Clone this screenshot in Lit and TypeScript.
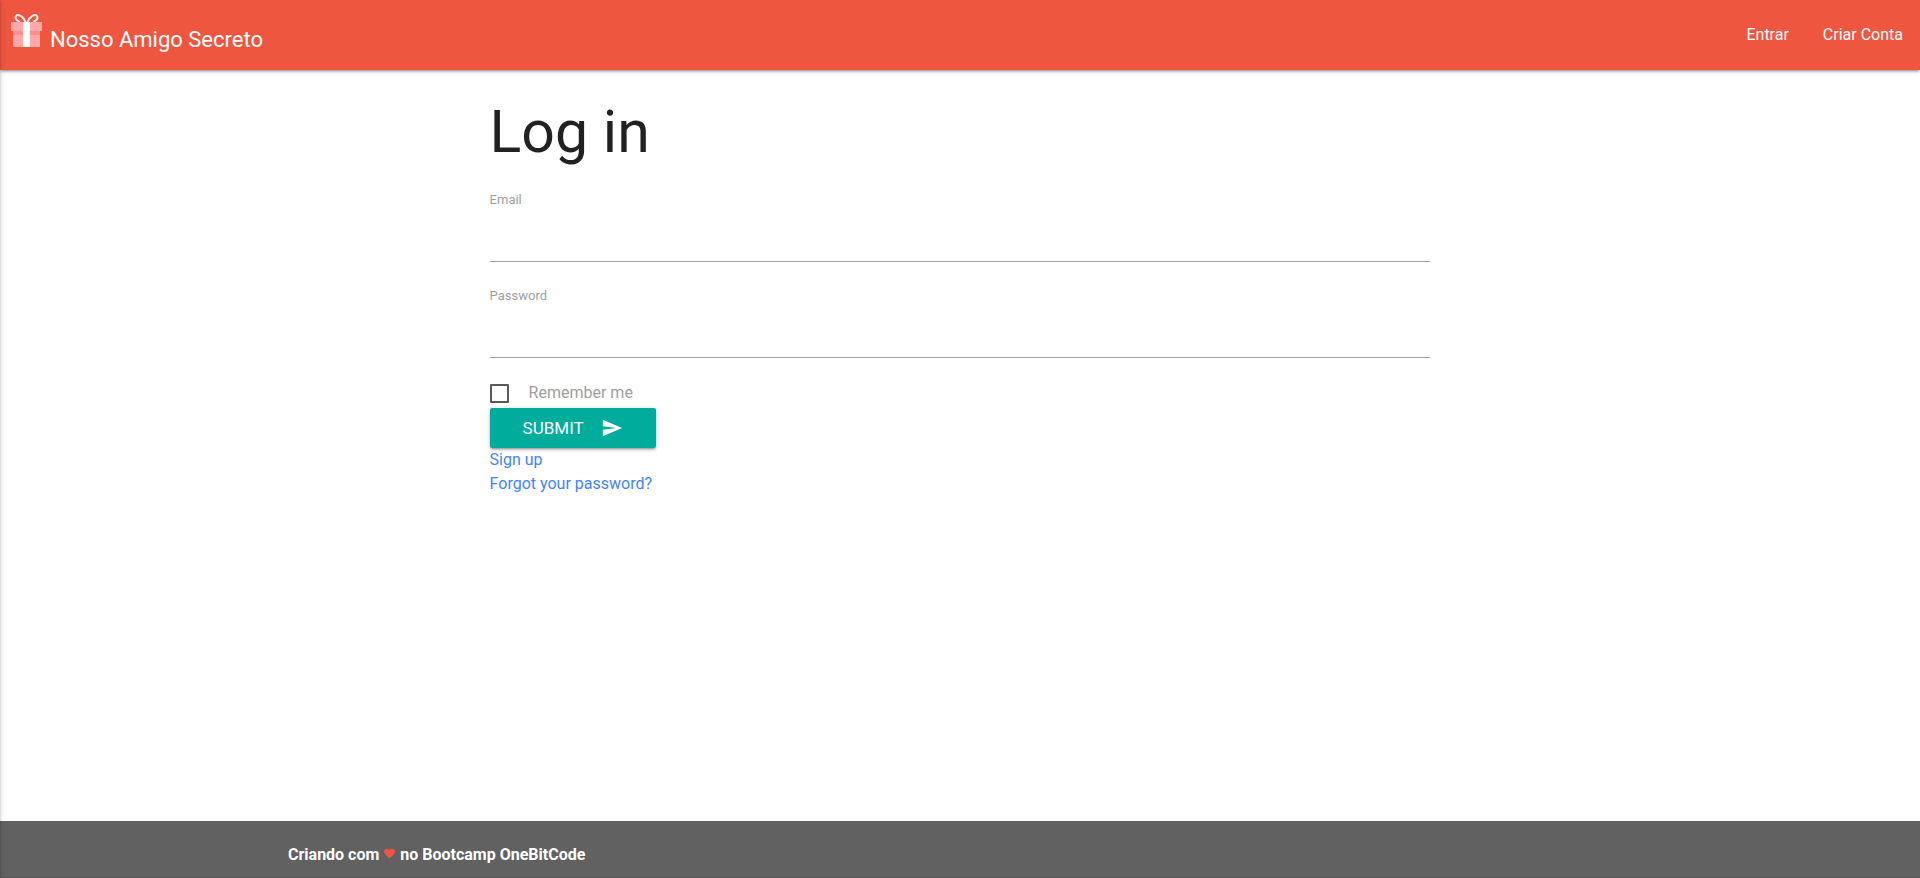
import { LitElement, html, css } from "lit";
import { customElement } from "lit/decorators.js";

@customElement("app-root")
export class AppRoot extends LitElement {
  static styles = css`
    :host {
      display: flex;
      flex-direction: column;
      min-height: 100vh;
      font-family: Roboto, sans-serif;
      font-size: 16px;
      line-height: 24px;
      color: rgba(0, 0, 0, 0.87);
      background: #fff;
    }
    * {
      box-sizing: border-box;
    }
    a {
      color: #4285f4;
      text-decoration: none;
    }
    .bar {
      display: flex;
      justify-content: space-between;
      height: 70px;
      padding-left: 10px;
      background: #ee5640;
      box-shadow: 0 2px 2px 0 rgba(0, 0, 0, 0.14),
        0 3px 1px -2px rgba(0, 0, 0, 0.12), 0 1px 5px 0 rgba(0, 0, 0, 0.2);
    }
    .brand {
      display: flex;
      align-items: flex-start;
      gap: 7px;
      padding-top: 13px;
      font-size: 22px;
      color: #fff;
    }
    .brand span {
      padding-top: 15px;
    }
    .gift {
      display: block;
      width: 33px;
      height: 35px;
    }
    .menu {
      display: flex;
      margin: 0;
      padding: 0;
      list-style: none;
    }
    .menu a {
      display: block;
      padding: 0 17px;
      line-height: 70px;
      color: #fff;
    }
    main {
      flex: 1;
    }
    .container {
      width: 70%;
      margin: 0 auto;
    }
    h1 {
      margin: 29px 0 22px;
      font-size: 59px;
      line-height: 65px;
      font-weight: 400;
    }
    .field {
      display: flex;
      flex-direction: column;
      margin-bottom: 20px;
    }
    .field label {
      font-size: 13px;
      line-height: 27px;
      color: #9e9e9e;
    }
    .field input {
      width: 100%;
      height: 49px;
      padding: 0;
      border: 0;
      border-bottom: 1px solid #9e9e9e;
      background: transparent;
      font: inherit;
      outline: none;
    }
    .remember {
      display: flex;
      align-items: center;
      gap: 20px;
      height: 30px;
      color: #9e9e9e;
    }
    .remember input {
      appearance: none;
      width: 19px;
      height: 19px;
      margin: 0;
      border: 2px solid #5a5a5a;
      border-radius: 1px;
    }
    .remember input:checked {
      background: #00ac9b;
    }
    .submit {
      display: flex;
      align-items: center;
      gap: 17px;
      height: 40px;
      padding: 0 33px;
      border: 0;
      border-radius: 2px;
      background: #00ac9b;
      color: #fff;
      font: inherit;
      font-size: 17px;
      text-transform: uppercase;
      cursor: pointer;
      box-shadow: 0 2px 2px 0 rgba(0, 0, 0, 0.14),
        0 3px 1px -2px rgba(0, 0, 0, 0.12), 0 1px 5px 0 rgba(0, 0, 0, 0.2);
    }
    .submit svg {
      width: 22px;
      height: 22px;
    }
    .links {
      display: flex;
      flex-direction: column;
      align-items: flex-start;
    }
    footer {
      padding-top: 22px;
      background: #616161;
      color: #fff;
      font-weight: 700;
    }
    footer .container {
      padding-bottom: 10px;
    }
    .heart {
      width: 13px;
      height: 13px;
    }
    .strip {
      height: 1px;
      background: rgba(51, 51, 51, 0.2);
    }
    .drawer {
      position: fixed;
      top: 0;
      bottom: 0;
      left: -300px;
      width: 300px;
      box-shadow: 0 2px 2px 0 rgba(0, 0, 0, 0.14),
        0 3px 1px -2px rgba(0, 0, 0, 0.12), 0 1px 5px 0 rgba(0, 0, 0, 0.2);
    }
  `;

  render() {
    return html`
      <nav class="bar">
        <a class="brand" href="#">
          <svg class="gift" viewBox="0 0 33 35" aria-hidden="true">
            <g fill="none" stroke="#fff" stroke-opacity=".9" stroke-width="2">
              <path d="M15.500 9C14 4 8 0.500 6 3 4.500 5.500 6.500 7.500 10 9" />
              <path d="M17.500 9C19 4 25 0.500 27 3 28.500 5.500 26.500 7.500 23 9" />
            </g>
            <path fill="#ffa9a9" d="M1 9h31v9H1zM3 18h27v16H3z" />
            <path fill="#ff8e8e" d="M3 18h27v4H3z" />
            <path fill="#fff" d="M13 9h7v25h-7z" />
          </svg>
          <span>Nosso Amigo Secreto</span>
        </a>
        <ul class="menu">
          <li><a href="#entrar">Entrar</a></li>
          <li><a href="#criar-conta">Criar Conta</a></li>
        </ul>
      </nav>
      <main>
        <div class="container">
          <div class="container">
            <h1>Log in</h1>
            <form>
              <div class="field">
                <label for="email">Email</label>
                <input id="email" type="email" />
              </div>
              <div class="field">
                <label for="password">Password</label>
                <input id="password" type="password" />
              </div>
              <label class="remember">
                <input type="checkbox" />
                <span>Remember me</span>
              </label>
              <button class="submit" type="submit">
                Submit
                <svg viewBox="0 0 24 24" fill="currentColor" aria-hidden="true">
                  <path d="M2.01 21L23 12 2.01 3 2 10l15 2-15 2z" />
                </svg>
              </button>
            </form>
            <div class="links">
              <a href="#sign-up">Sign up</a>
              <a href="#forgot">Forgot your password?</a>
            </div>
          </div>
        </div>
      </main>
      <footer>
        <div class="container">
          Criando com
          <svg class="heart" viewBox="0 0 24 24" fill="#ee5640" aria-label="amor">
            <path
              d="M12 21.35l-1.45-1.32C5.4 15.36 2 12.28 2 8.5 2 5.42 4.42 3 7.5 3c1.74 0 3.41.81 4.5 2.09C13.09 3.81 14.76 3 16.5 3 19.58 3 22 5.42 22 8.5c0 3.78-3.4 6.86-8.55 11.54L12 21.35z"
            />
          </svg>
          no Bootcamp OneBitCode
        </div>
        <div class="strip"></div>
      </footer>
      <aside class="drawer" aria-hidden="true"></aside>
    `;
  }
}
